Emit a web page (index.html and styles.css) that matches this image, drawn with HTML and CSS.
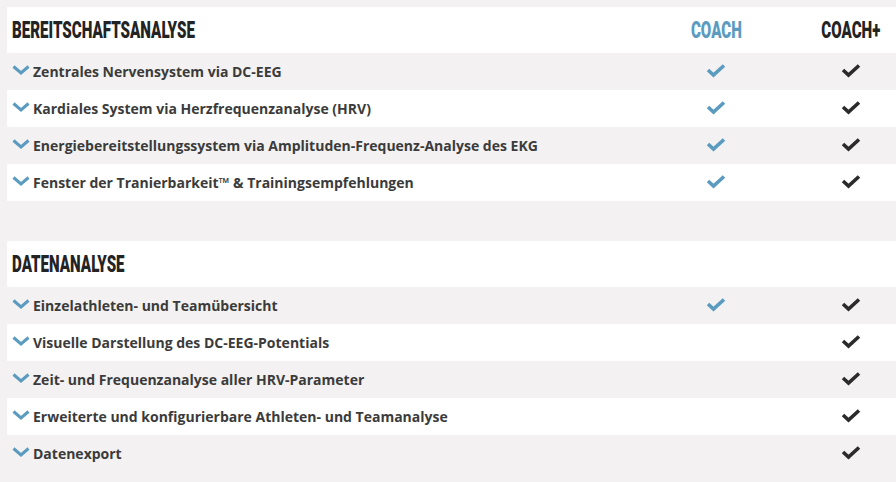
FILE: index.html
```html
<!DOCTYPE html>
<html lang="de">
<head>
<meta charset="utf-8">
<link rel="stylesheet" href="styles.css">
</head>
<body>
<div class="page">
  <section class="table">
    <div class="row head">
      <div class="cell feat"><h2 class="title">BEREITSCHAFTSANALYSE</h2></div>
      <div class="cell col"><span class="plan coach">COACH</span></div>
      <div class="cell col"><span class="plan plus">COACH+</span></div>
    </div>
    <div class="row alt">
      <div class="cell feat"><svg class="chev" viewBox="0 0 18 10"><polyline points="1.5,1.5 9,8 16.5,1.5"/></svg>Zentrales Nervensystem via DC-EEG</div>
      <div class="cell col"><svg class="check blue" viewBox="0 0 20 15"><polyline points="2,7 7.5,12 18,2.5"/></svg></div>
      <div class="cell col"><svg class="check dark" viewBox="0 0 20 15"><polyline points="2,7 7.5,12 18,2.5"/></svg></div>
    </div>
    <div class="row">
      <div class="cell feat"><svg class="chev" viewBox="0 0 18 10"><polyline points="1.5,1.5 9,8 16.5,1.5"/></svg>Kardiales System via Herzfrequenzanalyse (HRV)</div>
      <div class="cell col"><svg class="check blue" viewBox="0 0 20 15"><polyline points="2,7 7.5,12 18,2.5"/></svg></div>
      <div class="cell col"><svg class="check dark" viewBox="0 0 20 15"><polyline points="2,7 7.5,12 18,2.5"/></svg></div>
    </div>
    <div class="row alt">
      <div class="cell feat"><svg class="chev" viewBox="0 0 18 10"><polyline points="1.5,1.5 9,8 16.5,1.5"/></svg>Energiebereitstellungssystem via Amplituden-Frequenz-Analyse des EKG</div>
      <div class="cell col"><svg class="check blue" viewBox="0 0 20 15"><polyline points="2,7 7.5,12 18,2.5"/></svg></div>
      <div class="cell col"><svg class="check dark" viewBox="0 0 20 15"><polyline points="2,7 7.5,12 18,2.5"/></svg></div>
    </div>
    <div class="row">
      <div class="cell feat"><svg class="chev" viewBox="0 0 18 10"><polyline points="1.5,1.5 9,8 16.5,1.5"/></svg>Fenster der Tranierbarkeit™ &amp; Trainingsempfehlungen</div>
      <div class="cell col"><svg class="check blue" viewBox="0 0 20 15"><polyline points="2,7 7.5,12 18,2.5"/></svg></div>
      <div class="cell col"><svg class="check dark" viewBox="0 0 20 15"><polyline points="2,7 7.5,12 18,2.5"/></svg></div>
    </div>
  </section>

  <section class="table">
    <div class="row head">
      <div class="cell feat"><h2 class="title">DATENANALYSE</h2></div>
      <div class="cell col"></div>
      <div class="cell col"></div>
    </div>
    <div class="row alt">
      <div class="cell feat"><svg class="chev" viewBox="0 0 18 10"><polyline points="1.5,1.5 9,8 16.5,1.5"/></svg>Einzelathleten- und Teamübersicht</div>
      <div class="cell col"><svg class="check blue" viewBox="0 0 20 15"><polyline points="2,7 7.5,12 18,2.5"/></svg></div>
      <div class="cell col"><svg class="check dark" viewBox="0 0 20 15"><polyline points="2,7 7.5,12 18,2.5"/></svg></div>
    </div>
    <div class="row">
      <div class="cell feat"><svg class="chev" viewBox="0 0 18 10"><polyline points="1.5,1.5 9,8 16.5,1.5"/></svg>Visuelle Darstellung des DC-EEG-Potentials</div>
      <div class="cell col"></div>
      <div class="cell col"><svg class="check dark" viewBox="0 0 20 15"><polyline points="2,7 7.5,12 18,2.5"/></svg></div>
    </div>
    <div class="row alt">
      <div class="cell feat"><svg class="chev" viewBox="0 0 18 10"><polyline points="1.5,1.5 9,8 16.5,1.5"/></svg>Zeit- und Frequenzanalyse aller HRV-Parameter</div>
      <div class="cell col"></div>
      <div class="cell col"><svg class="check dark" viewBox="0 0 20 15"><polyline points="2,7 7.5,12 18,2.5"/></svg></div>
    </div>
    <div class="row">
      <div class="cell feat"><svg class="chev" viewBox="0 0 18 10"><polyline points="1.5,1.5 9,8 16.5,1.5"/></svg>Erweiterte und konfigurierbare Athleten- und Teamanalyse</div>
      <div class="cell col"></div>
      <div class="cell col"><svg class="check dark" viewBox="0 0 20 15"><polyline points="2,7 7.5,12 18,2.5"/></svg></div>
    </div>
    <div class="row alt">
      <div class="cell feat"><svg class="chev" viewBox="0 0 18 10"><polyline points="1.5,1.5 9,8 16.5,1.5"/></svg>Datenexport</div>
      <div class="cell col"></div>
      <div class="cell col"><svg class="check dark" viewBox="0 0 20 15"><polyline points="2,7 7.5,12 18,2.5"/></svg></div>
    </div>
  </section>
</div>
</body>
</html>
```
FILE: styles.css
```css
html, body {
  margin: 0;
  padding: 0;
  background: #f3f1f1;
  overflow: hidden;
}
.page {
  width: 914px;
  padding: 7px 0 0 7px;
  display: flex;
  flex-direction: column;
  gap: 40px;
  font-family: "Open Sans", "DejaVu Sans", sans-serif;
}
.table {
  display: flex;
  flex-direction: column;
}
.row {
  display: grid;
  grid-template-columns: 1fr 130px 140px;
  height: 37px;
  background: #ffffff;
}
.row.alt {
  background: #f3f1f1;
}
.row.head {
  height: 46px;
  background: #ffffff;
}
.cell {
  display: flex;
  align-items: center;
}
.col {
  justify-content: center;
}
.feat {
  padding-left: 5px;
  font-size: 14px;
  font-weight: 700;
  color: #3b3b3b;
}
.title {
  margin: 0;
  font-family: Roboto, "Liberation Sans", sans-serif;
  font-weight: 900;
  font-size: 24px;
  color: #232323;
  transform: scaleX(0.63);
  transform-origin: left center;
  white-space: nowrap;
}
.plan {
  display: inline-block;
  font-family: Roboto, "Liberation Sans", sans-serif;
  font-weight: 900;
  font-size: 24px;
  transform: scaleX(0.63);
  white-space: nowrap;
}
.coach { color: #5b9bbf; }
.plus { color: #232323; }
.chev {
  width: 18px;
  height: 10px;
  margin-right: 3px;
  margin-top: -4px;
  fill: none;
  stroke: #5b9bbf;
  stroke-width: 3;
}
.check {
  width: 20px;
  height: 15px;
  margin-top: -3px;
  fill: none;
  stroke-width: 3.6;
}
.check.blue { stroke: #5b9bbf; }
.check.dark { stroke: #2b2b2b; }
```
